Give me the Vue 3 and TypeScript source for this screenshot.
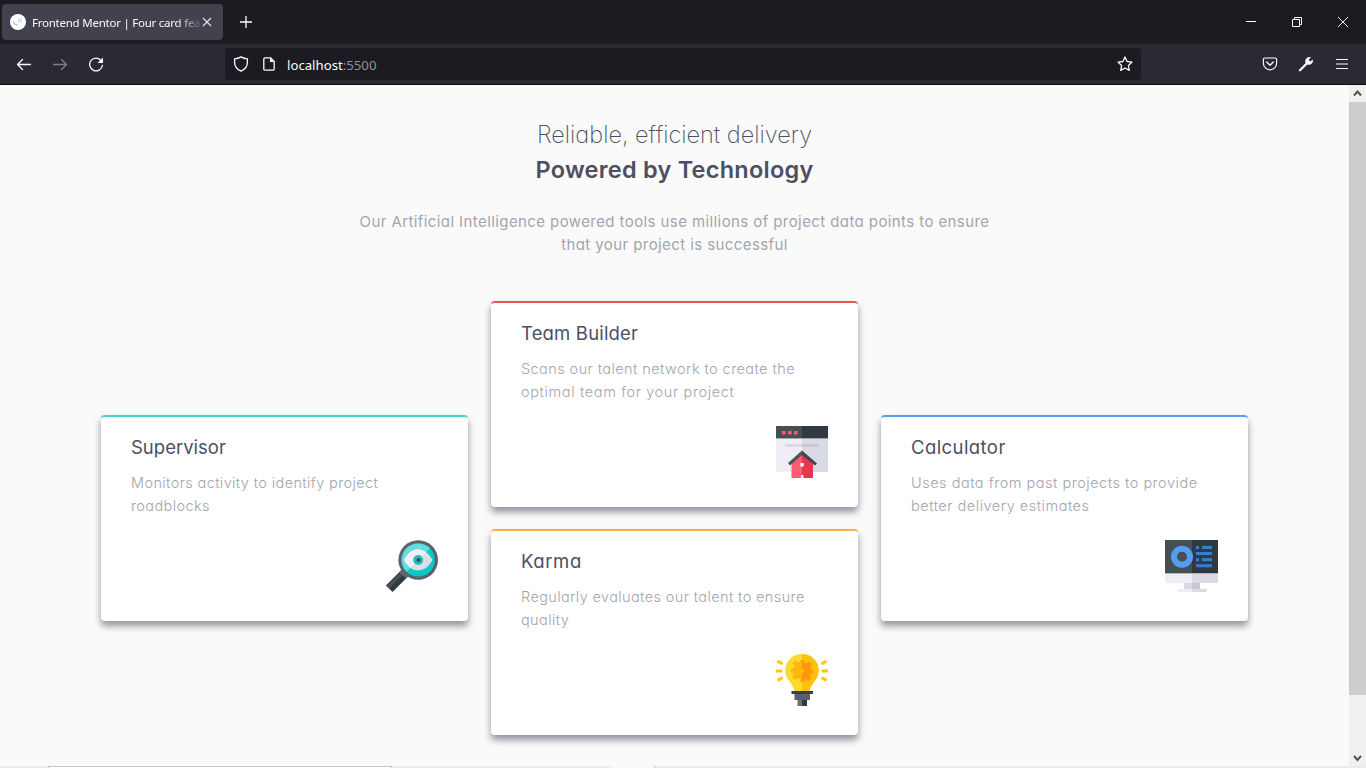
<script setup lang="ts">
interface Card {
  id: string
  title: string
  lines: string[]
}

const cards: Card[] = [
  { id: 'supervisor', title: 'Supervisor', lines: ['Monitors activity to identify project', 'roadblocks'] },
  { id: 'team', title: 'Team Builder', lines: ['Scans our talent network to create the', 'optimal team for your project'] },
  { id: 'karma', title: 'Karma', lines: ['Regularly evaluates our talent to ensure', 'quality'] },
  { id: 'calculator', title: 'Calculator', lines: ['Uses data from past projects to provide', 'better delivery estimates'] },
]
</script>

<template>
  <div class="window">
    <div class="tabbar">
      <div class="tab">
        <svg class="favicon" width="16" height="16" viewBox="0 0 16 16">
          <circle cx="8" cy="8" r="8" fill="#fff" />
          <path d="M3.4 7.5c.4 2.3 2.300 3.500 4.600 3.500" fill="none" stroke="#a5aed6" stroke-width="1.200" />
          <path d="M8.500 4.500v4M12 4.500L9.500 6.600 12 8.500" fill="none" stroke="#b5e5ec" stroke-width="1.200" />
        </svg>
        <span class="tab-title">Frontend Mentor | Four card fea</span>
        <svg class="tab-close" width="10" height="10" viewBox="0 0 10 10"><path d="M1 1l8 8M9 1L1 9" stroke="#e6e6ea" stroke-width="1.100" /></svg>
      </div>
      <svg class="plus" width="12" height="12" viewBox="0 0 12 12"><path d="M6 0v12M0 6h12" stroke="#fbfbfe" stroke-width="1.300" /></svg>
      <div class="controls">
        <svg width="10" height="10" viewBox="0 0 10 10"><path d="M0 4.500h10" stroke="#fff" /></svg>
        <svg width="10" height="10" viewBox="0 0 10 10"><path d="M.5 2.500h7v7h-7zM2.500 2.500v-2h7v7h-2" fill="none" stroke="#fff" /></svg>
        <svg width="10" height="10" viewBox="0 0 10 10"><path d="M0 0l10 10M10 0L0 10" stroke="#fff" stroke-width=".9" /></svg>
      </div>
    </div>

    <div class="toolbar">
      <div class="nav">
        <svg width="16" height="16" viewBox="0 0 16 16"><path d="M14.500 8.500H1.500M6.500 3.500l-5 5 5 5" class="stroke" /></svg>
        <svg class="dim" width="16" height="16" viewBox="0 0 16 16"><path d="M1.500 8.500h13M9.500 3.500l5 5-5 5" class="stroke" /></svg>
        <svg width="16" height="16" viewBox="0 0 16 16">
          <path d="M13.300 4.800A6.400 6.400 0 1 0 14.400 9.500" class="stroke" />
          <path d="M15 1.500V7H9.500z" fill="#fbfbfe" />
        </svg>
      </div>
      <div class="urlbar">
        <svg width="16" height="16" viewBox="0 0 16 16"><path d="M8 .9c2 1.200 4 1.800 6.400 2v3.700c0 4.100-2.600 7-6.400 8.600C4.200 13.600 1.600 10.700 1.600 6.600V2.900C4 2.700 6 2.100 8 .9z" class="stroke" /></svg>
        <svg class="page-icon" width="12" height="14" viewBox="0 0 12 14">
          <path d="M2 .8h5.500L11.200 4.500V12c0 .8-.4 1.200-1.200 1.200H2c-.8 0-1.200-.4-1.200-1.200V2C.8 1.200 1.200.8 2 .8z" class="stroke" />
          <path d="M7 .8V5h4.300z" fill="#fbfbfe" />
        </svg>
        <span class="url">localhost<span class="port">:5500</span></span>
        <svg class="star" width="16" height="16" viewBox="0 0 16 16"><path d="M8 1l2.100 4.500 4.900.6-3.600 3.400.9 4.900L8 12l-4.300 2.400.9-4.900L1 6.100l4.900-.6z" class="stroke" /></svg>
      </div>
      <div class="actions">
        <svg width="16" height="16" viewBox="0 0 16 16">
          <path d="M2.700 2h10.600c.8 0 1.300.5 1.300 1.300V7.200a6.600 6.600 0 0 1-13.200 0V3.300C1.400 2.500 1.900 2 2.700 2z" class="stroke thin" />
          <path d="M4.700 6L8 9.200 11.300 6" class="stroke" />
        </svg>
        <svg width="16" height="16" viewBox="0 0 16 16">
          <path d="M2 14.200L9 7.200" stroke="#fbfbfe" stroke-width="2.300" stroke-linecap="round" />
          <path d="M12.900 1.400A4.200 4.200 0 0 0 7.300 6.400L9.500 8.600A4.200 4.200 0 0 0 14.800 3.400L12.300 5.500 10.600 3.800z" fill="#fbfbfe" />
        </svg>
        <svg width="16" height="16" viewBox="0 0 16 16"><path d="M2.500 3.500h11M2.500 8h11M2.500 12.500h11" class="stroke thin" /></svg>
      </div>
    </div>

    <div class="viewport">
      <main class="page">
        <h1>
          <span class="line light">Reliable, efficient delivery</span>
          <span class="line bold">Powered by Technology</span>
        </h1>
        <p class="intro">
          <span class="line">Our Artificial Intelligence powered tools use millions of project data points to ensure</span>
          <span class="line">that your project is successful</span>
        </p>
        <section class="grid">
          <article v-for="card in cards" :key="card.id" class="card" :class="card.id">
            <h2>{{ card.title }}</h2>
            <p>
              <span v-for="line in card.lines" :key="line" class="line">{{ line }}</span>
            </p>
            <svg v-if="card.id === 'supervisor'" class="art" viewBox="0 0 52 52">
              <path d="M15.500 30l6.500 6.500L6.500 52 0 45.500z" fill="#32393f" />
              <path d="M15.500 30l3.200 3.200L3.200 48.800 0 45.500z" fill="#464f54" />
              <path d="M16.500 28.500l7 7-3.500 3-6.500-6.500z" fill="#656c75" />
              <circle cx="32.200" cy="20" r="19.800" fill="#5b626b" />
              <circle cx="32.200" cy="20" r="16.600" fill="#08c9c7" />
              <path d="M20.460 31.740A16.600 16.600 0 0 1 43.940 8.260z" fill="#60dfdc" />
              <path d="M18 20C25 6 39 6 46.500 20 39 34 25 34 18 20z" fill="#dddde8" />
              <path d="M18 20C24 8 33 7 40 12.200L24.800 27.400C22 25.500 20 23.500 18 20z" fill="#efeff5" />
              <circle cx="32.200" cy="20" r="5" fill="#20bdbd" />
              <circle cx="32.500" cy="20" r="2" fill="#3c4651" />
            </svg>
            <svg v-else-if="card.id === 'team'" class="art" viewBox="0 0 52 52">
              <path d="M0 12h26v34H0z" fill="#eeeef4" />
              <path d="M26 12h26v34H26z" fill="#dadae5" />
              <path d="M0 0h26v12H0z" fill="#464f54" />
              <path d="M26 0h26v12H26z" fill="#323a40" />
              <path d="M0 12h52v1H0z" fill="#a4a6ad" />
              <path d="M6 5h3.500v3.500H6zM12 5h3.500v3.500H12zM18 5h3.500v3.500H18z" fill="#ff5b75" />
              <path d="M9.500 18H26v3H9.500z" fill="#dadae4" />
              <path d="M26 18h16.500v3H26z" fill="#c8c8d2" />
              <path d="M15.500 37L26 28v24H15.500z" fill="#ff5b75" />
              <path d="M26 28l11 9v15H26z" fill="#e8364f" />
              <path d="M12 37L26 24.500V29L14 39.500z" fill="#4d565a" />
              <path d="M26 24.500L41 37.500 39 39.500 26 29z" fill="#3c464b" />
              <path d="M24.300 37h3.500v3.500h-3.500zM25 49h2.500v3H25z" fill="#f5edf2" />
            </svg>
            <svg v-else-if="card.id === 'karma'" class="art" viewBox="0 0 52 52">
              <path d="M26 0C16 0 9.200 7.500 9.200 16.500c0 9.500 8.500 13 9 20.500H26z" fill="#ffd92e" />
              <path d="M26 0c10 0 16.800 7.500 16.800 16.500 0 9.500-8.500 13-9 20.500H26z" fill="#ffc20c" />
              <path d="M24 6h2v22h-2v-3l-2.500-1-2.500 2-3-3 2-2.500-1-2H15v-4h2.500l1-2.500-2-2.500 3-3 2.500 2 2-1z" fill="#ffb50a" />
              <path d="M26 6h2v2.500l2.500 1 2.500-2 3 3-2 2.500 1 2.500H37v4h-2.500l-1 2 2 2.500-3 3-2.500-2-2 1v2h-2z" fill="#ff970c" />
              <circle cx="26" cy="17" r="2" fill="#ffc20c" />
              <path d="M1.500 7l5 3M0 17h6.200M1.500 26.500l5-3M50.500 7l-5 3M52 17h-6.200M50.500 26.500l-5-3" stroke="#ffc60d" stroke-width="3.200" />
              <path d="M15.500 37H37v3H15.500z" fill="#394147" />
              <path d="M18.500 40H34v6H18.500z" fill="#596067" />
              <path d="M21.500 46H31v6h-9.500z" fill="#697078" />
              <path d="M26 46h5v6h-5z" fill="#32393f" />
            </svg>
            <svg v-else class="art" viewBox="0 0 52 52">
              <path d="M-1 0h27v33H-1z" fill="#464f54" />
              <path d="M26 0h26v33H26z" fill="#303940" />
              <path d="M-1 33h27v10H-1z" fill="#eeeef3" />
              <path d="M26 33h26v10H26z" fill="#dadae4" />
              <path d="M-1 33h53v1H-1z" fill="#b2b4bc" />
              <path d="M18 43h8v6h-8z" fill="#dadae3" />
              <path d="M26 43h8v6h-8z" fill="#c7c7d1" />
              <path d="M11.500 49H26v3H11.500z" fill="#eeeef3" />
              <path d="M26 49h14.500v3H26z" fill="#dadae4" />
              <circle cx="16" cy="16.700" r="8" fill="none" stroke="#549ef2" stroke-width="6" />
              <path d="M30 7.500h3M36 7.500h10M30 13.600h16M30 19.700h3M36 19.700h10M30 25.800h16" stroke="#337fd6" stroke-width="3" />
            </svg>
          </article>
        </section>
      </main>
      <div class="scrollbar">
        <svg width="17" height="17" viewBox="0 0 17 17"><path d="M5 10.500l3.500-4 3.500 4" fill="none" stroke="#505050" stroke-width="1.900" /></svg>
        <div class="thumb"></div>
        <svg class="down" width="17" height="17" viewBox="0 0 17 17"><path d="M5 7l3.500 4L12 7" fill="none" stroke="#505050" stroke-width="1.900" /></svg>
      </div>
    </div>
    <div class="taskbar"><div class="search"></div><div class="task"></div></div>
  </div>
</template>

<style>
body {
  margin: 0;
  overflow: hidden;
}
</style>

<style scoped>
* {
  box-sizing: border-box;
}
.window {
  width: 1366px;
  height: 768px;
  display: flex;
  flex-direction: column;
  overflow: hidden;
  background: #fafafa;
  font-family: 'Inter', 'Liberation Sans', sans-serif;
}
svg {
  display: block;
  flex: none;
}
.stroke {
  fill: none;
  stroke: #fbfbfe;
  stroke-width: 1.3;
  stroke-linejoin: round;
  stroke-linecap: round;
}
.thin {
  stroke-width: 1.15;
}
.tabbar {
  height: 44px;
  flex: none;
  background: #1c1b22;
  display: flex;
  align-items: center;
  padding: 0 18px 0 2px;
}
.tab {
  width: 221px;
  height: 36px;
  border-radius: 4px;
  background: #42414d;
  display: flex;
  align-items: center;
  padding-left: 8px;
}
.tab-title {
  width: 170px;
  margin-left: 6px;
  white-space: nowrap;
  font: 11.5px/18px 'Noto Sans', sans-serif;
  letter-spacing: -0.24px;
  padding-top: 1px;
  color: #fbfbfe;
  mask-image: linear-gradient(to right, #000 144px, transparent 172px);
}
.plus {
  margin-left: 17px;
}
.controls {
  margin-left: auto;
  display: flex;
  gap: 36px;
}
.toolbar {
  height: 41px;
  flex: none;
  background: #2b2a33;
  border-bottom: 1px solid #0c0c0d;
  display: flex;
  align-items: center;
}
.nav {
  width: 225px;
  padding-left: 16px;
  display: flex;
  gap: 20px;
}
.dim {
  opacity: 0.4;
}
.urlbar {
  width: 916px;
  height: 32px;
  border-radius: 4px;
  background: #1c1b22;
  display: flex;
  align-items: center;
  padding: 0 8px;
}
.page-icon {
  margin-left: 14px;
}
.url {
  margin-left: 12px;
  padding-top: 1px;
  font: 13.2px/20px 'Noto Sans', sans-serif;
  color: #fbfbfe;
}
.port {
  color: #8f8f98;
}
.star {
  margin-left: auto;
}
.actions {
  margin-left: 121px;
  display: flex;
  gap: 20px;
}
.viewport {
  height: 681px;
  flex: none;
  display: flex;
  overflow: hidden;
}
.page {
  width: 1349px;
  background: #fafafa;
  padding-top: 32px;
  color: #4d4f62;
  font-feature-settings: 'cv11';
}
.line {
  display: block;
  white-space: nowrap;
}
h1 {
  margin: 0;
  font-size: 23.5px;
  line-height: 35px;
  text-align: center;
}
.light {
  font-weight: 200;
}
.bold {
  font-weight: 600;
  letter-spacing: 0.25px;
}
.intro {
  margin: 23px 0 0;
  text-align: center;
  font-size: 15px;
  line-height: 23px;
  letter-spacing: 0.41px;
  color: #a3a5ae;
}
.grid {
  margin: 45px 0 0 101px;
  display: grid;
  grid-template-columns: repeat(3, 367px);
  grid-template-rows: repeat(4, 92px);
  column-gap: 23px;
  row-gap: 22px;
}
.card {
  display: flex;
  flex-direction: column;
  padding: 16px 30px 29px;
  border-top: 2px solid;
  border-radius: 4px;
  background: #fff;
  box-shadow: 0 5px 7px rgba(76, 78, 97, 0.6);
}
.card h2 {
  margin: 0;
  font-size: 18.5px;
  font-weight: 400;
  line-height: 28px;
  white-space: nowrap;
}
.card p {
  margin: 10px 0 0;
  font-size: 14.5px;
  font-weight: 300;
  line-height: 23px;
  letter-spacing: 0.38px;
  color: #a3a5ae;
}
.supervisor {
  grid-area: 2 / 1 / span 2;
  border-color: #45d3d3;
}
.team {
  grid-area: 1 / 2 / span 2;
  border-color: #ea5353;
}
.team h2 {
  letter-spacing: 0.17px;
}
.team p {
  letter-spacing: 0.42px;
}
.team .line + .line {
  letter-spacing: 0.63px;
}
.karma {
  grid-area: 3 / 2 / span 2;
  border-color: #fcae4a;
}
.karma h2 {
  letter-spacing: 0.6px;
}
.calculator {
  grid-area: 2 / 3 / span 2;
  border-color: #549ef2;
}
.calculator h2 {
  letter-spacing: 0.42px;
}
.calculator p {
  letter-spacing: 0.51px;
}
.art {
  width: 52px;
  height: 52px;
  margin: auto 0 0 auto;
  overflow: visible;
}
.scrollbar {
  width: 17px;
  background: #f0f0f0;
  display: flex;
  flex-direction: column;
}
.thumb {
  height: 593px;
  background: #cdcdcd;
}
.down {
  margin-top: auto;
}
.taskbar {
  height: 2px;
  background: #ececec;
  display: flex;
}
.search {
  width: 344px;
  margin-left: 48px;
  background: #fff;
  border: 1px solid #c6c6c6;
  border-bottom: 0;
}
.task {
  width: 45px;
  margin-left: 218px;
  background: #f8f8f8;
  border-right: 1px solid #c6c6c6;
}
</style>
